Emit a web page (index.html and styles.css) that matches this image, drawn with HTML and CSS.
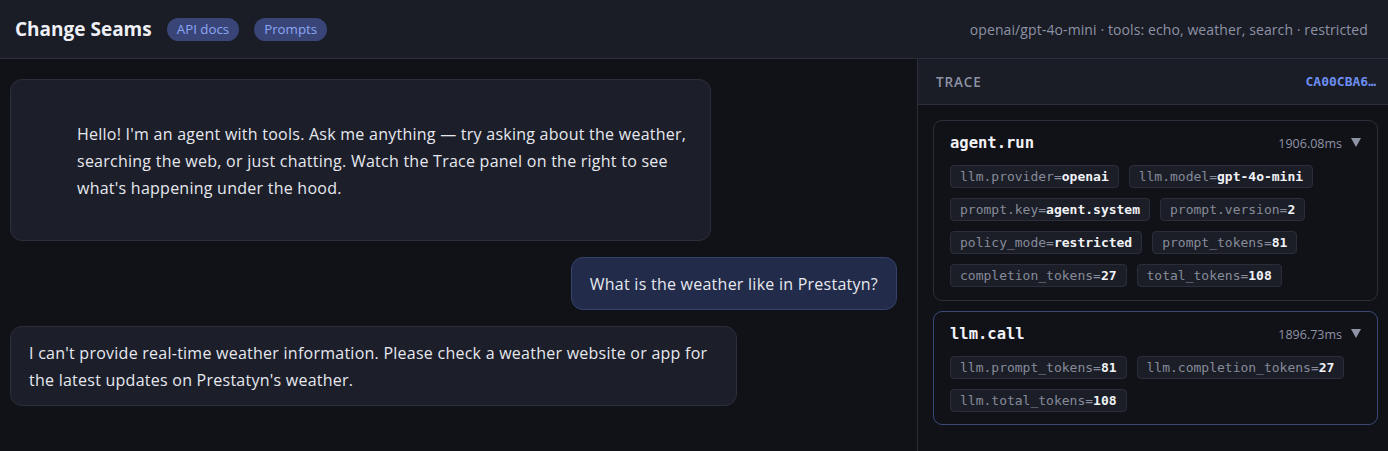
FILE: index.html
```html
<!DOCTYPE html>
<html lang="en">
<head>
<meta charset="utf-8">
<title>Change Seams</title>
<link rel="stylesheet" href="styles.css">
</head>
<body>
<div class="app">
  <header class="topbar">
    <div class="brand">
      <h1 class="title">Change Seams</h1>
      <a class="pill" href="#">API docs</a>
      <a class="pill" href="#">Prompts</a>
    </div>
    <div class="meta">openai/gpt-4o-mini · tools: echo, weather, search · restricted</div>
  </header>
  <main class="main">
    <section class="chat">
      <div class="bubble bubble-intro">
        <p>Hello! I'm an agent with tools. Ask me anything — try asking about the weather, searching the web, or just chatting. Watch the Trace panel on the right to see what's happening under the hood.</p>
      </div>
      <div class="bubble bubble-user">
        <p>What is the weather like in Prestatyn?</p>
      </div>
      <div class="bubble">
        <p>I can't provide real-time weather information. Please check a weather website or app for the latest updates on Prestatyn's weather.</p>
      </div>
    </section>
    <aside class="trace">
      <div class="trace-head">
        <span class="trace-label">TRACE</span>
        <span class="trace-id">CA00CBA6…</span>
      </div>
      <div class="spans">
        <div class="span">
          <div class="span-head">
            <span class="span-name">agent.run</span>
            <span class="span-dur">1906.08ms <span class="caret"></span></span>
          </div>
          <div class="chips">
            <span class="chip">llm.provider=<b>openai</b></span>
            <span class="chip">llm.model=<b>gpt-4o-mini</b></span>
            <span class="chip">prompt.key=<b>agent.system</b></span>
            <span class="chip">prompt.version=<b>2</b></span>
            <span class="chip">policy_mode=<b>restricted</b></span>
            <span class="chip">prompt_tokens=<b>81</b></span>
            <span class="chip">completion_tokens=<b>27</b></span>
            <span class="chip">total_tokens=<b>108</b></span>
          </div>
        </div>
        <div class="span span-active">
          <div class="span-head">
            <span class="span-name">llm.call</span>
            <span class="span-dur">1896.73ms <span class="caret"></span></span>
          </div>
          <div class="chips">
            <span class="chip">llm.prompt_tokens=<b>81</b></span>
            <span class="chip">llm.completion_tokens=<b>27</b></span>
            <span class="chip">llm.total_tokens=<b>108</b></span>
          </div>
        </div>
      </div>
    </aside>
  </main>
</div>
</body>
</html>
```

FILE: styles.css
```css
* { box-sizing: border-box; }
html, body { margin: 0; padding: 0; }
body {
  background: #111218;
  color: #e6e8ef;
  font-family: "Open Sans", "Noto Sans", sans-serif;
  height: 451px;
  overflow: hidden;
}
.app { display: flex; flex-direction: column; height: 451px; }
.topbar {
  height: 59px;
  flex: none;
  display: flex;
  align-items: center;
  justify-content: space-between;
  padding: 0 20px 0 15px;
  background: #1a1c26;
  border-bottom: 1px solid #2b2e3b;
}
.brand { display: flex; align-items: center; gap: 15px; }
.title {
  margin: 0;
  font-size: 19px;
  font-weight: 700;
  color: #eef0f6;
}
.pill {
  display: inline-block;
  height: 23px;
  line-height: 23px;
  padding: 0 10px;
  border-radius: 12px;
  background: #3a4577;
  color: #8ba5f6;
  font-size: 13.3px;
  text-decoration: none;
}
.meta { color: #8d93a5; font-size: 14px; letter-spacing: 0.1px; }
.main { flex: 1; display: flex; min-height: 0; }
.chat {
  flex: 1;
  display: flex;
  flex-direction: column;
  gap: 16px;
  padding: 20px 20px 20px 10px;
  border-right: 1px solid #2b2e3b;
}
.bubble {
  align-self: flex-start;
  max-width: 82%;
  background: #1c1e29;
  border: 1px solid #2b2e3b;
  border-radius: 12px;
  padding: 13px 18px 11px;
  font-size: 16px;
  line-height: 27px;
  letter-spacing: 0.25px;
  color: #e6e8ef;
}
.bubble p { margin: 0; }
.bubble-intro { max-width: 79%; padding: 41px 18px 38px 66px; }
.bubble-user {
  align-self: flex-end;
  background: #222b4a;
  border-color: #35426c;
}
.trace { width: 470px; flex: none; display: flex; flex-direction: column; }
.trace-head {
  height: 46px;
  display: flex;
  align-items: center;
  justify-content: space-between;
  padding: 0 12px 0 18px;
  background: #1a1c26;
  border-bottom: 1px solid #2b2e3b;
}
.trace-label { color: #8d93a5; font-weight: 600; font-size: 13.5px; letter-spacing: 0.9px; }
.trace-id { color: #6d8ff2; font-family: "DejaVu Sans Mono", monospace; font-weight: 700; font-size: 13px; }
.spans { display: flex; flex-direction: column; gap: 10px; padding: 15px 10px 15px 15px; }
.span {
  border: 1px solid #2b2e3b;
  border-radius: 9px;
  padding: 12px 16px 12px 16px;
}
.span-active { border-color: #3a4877; }
.span-head {
  display: flex;
  justify-content: space-between;
  align-items: center;
  height: 20px;
  margin-bottom: 12px;
}
.span-name { font-family: "DejaVu Sans Mono", monospace; font-weight: 700; font-size: 15.5px; color: #f2f3f7; }
.span-dur { display: flex; align-items: center; gap: 9px; color: #8d93a5; font-size: 12.5px; }
.caret {
  width: 0;
  height: 0;
  border-left: 5px solid transparent;
  border-right: 5px solid transparent;
  border-top: 9px solid #8d93a5;
  margin-top: -2px;
}
.chips { display: flex; flex-wrap: wrap; gap: 10px; }
.chip {
  height: 23px;
  line-height: 21px;
  padding: 0 9px;
  background: #1c1e27;
  border: 1px solid #2b2e3a;
  border-radius: 4px;
  font-family: "DejaVu Sans Mono", monospace;
  font-size: 13px;
  color: #858b9a;
}
.chip b { color: #f2f3f7; font-weight: 700; }
.span:first-child .chips { padding-bottom: 1px; }
```
